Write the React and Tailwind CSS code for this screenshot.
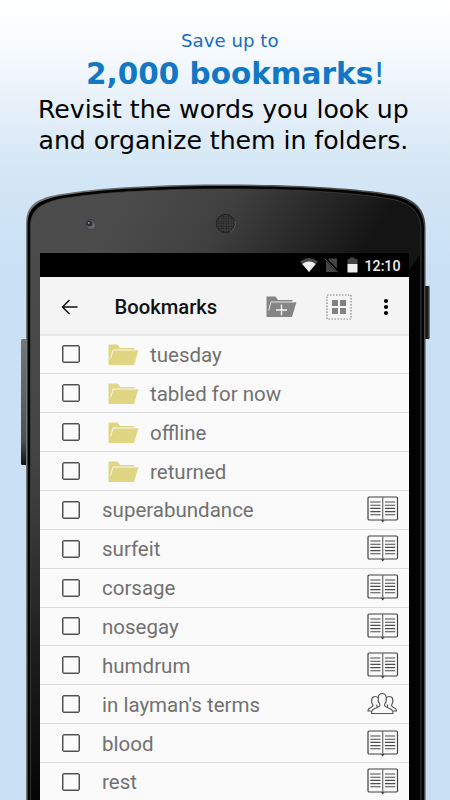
import React from "react";

const folders = ["tuesday", "tabled for now", "offline", "returned"];
const words = [
  ["superabundance", "book"],
  ["surfeit", "book"],
  ["corsage", "book"],
  ["nosegay", "book"],
  ["humdrum", "book"],
  ["in layman's terms", "people"],
  ["blood", "book"],
  ["rest", "book"],
];

function PhoneBody() {
  return (
    <svg className="absolute inset-0" width="450" height="800" viewBox="0 0 450 800">
      <defs>
        <linearGradient id="face" gradientUnits="userSpaceOnUse" x1="130" y1="190" x2="330" y2="310">
          <stop offset="0" stopColor="#4c4c4c" />
          <stop offset="0.4" stopColor="#404040" />
          <stop offset="1" stopColor="#141414" />
        </linearGradient>
        <linearGradient id="side" gradientUnits="userSpaceOnUse" x1="0" y1="253" x2="0" y2="800">
          <stop offset="0" stopColor="#4b4b4b" />
          <stop offset="0.35" stopColor="#454545" />
          <stop offset="0.5" stopColor="#383838" />
          <stop offset="0.72" stopColor="#1e1e1e" />
          <stop offset="1" stopColor="#050505" />
        </linearGradient>
        <linearGradient id="rim" x1="0" y1="0" x2="1" y2="0">
          <stop offset="0" stopColor="#77777a" />
          <stop offset="0.5" stopColor="#5c5c5c" />
          <stop offset="1" stopColor="#484848" />
        </linearGradient>
        <linearGradient id="keyL" x1="0" y1="0" x2="0" y2="1">
          <stop offset="0" stopColor="#777" />
          <stop offset="0.8" stopColor="#505050" />
          <stop offset="1" stopColor="#111" />
        </linearGradient>
        <linearGradient id="lens" x1="0" y1="0" x2="1" y2="1">
          <stop offset="0" stopColor="#343438" />
          <stop offset="1" stopColor="#807c80" />
        </linearGradient>
        <pattern id="mesh" width="2.5" height="2.5" patternUnits="userSpaceOnUse">
          <rect width="2.5" height="2.5" fill="#3a3a3a" />
          <circle cx="1.25" cy="1.25" r="0.7" fill="#1c1c1c" />
        </pattern>
      </defs>
      <rect x="21" y="339" width="7" height="126" rx="1.5" fill="url(#keyL)" />
      <rect x="424" y="286" width="5.5" height="53" rx="1" fill="#141414" />
      <path d="M428.3 287V338" stroke="#454545" />
      <path d="M26 810V224C26 206 35 199 58 194.500C102 187 166 184.500 226 184.500C286 184.500 350 187 394 194.500C417 199 425.500 211 425.500 228V810Z" fill="url(#rim)" />
      <path d="M27.500 810V224C27.500 208 37 200.500 59 196C103 188.500 167 186 226 186C285 186 349 188.500 393 196C415 200 424 212 424 229V810Z" fill="#030303" />
      <path d="M30.500 810V226C30.500 211 40 203.500 60 199C104 191.500 168 189 226 189C284 189 348 191.500 391 199C412 203 421 214 421 230V810Z" fill="url(#face)" stroke="#454545" strokeWidth="0.7" />
      <rect x="31" y="253" width="9" height="550" fill="url(#side)" />
      <path d="M409 270L420.500 254V800H409Z" fill="#020202" />
      <path d="M420.700 254V800" stroke="#303030" strokeWidth="0.8" />
      <circle cx="90.500" cy="224.500" r="5" fill="url(#lens)" stroke="#343434" strokeWidth="0.6" />
      <circle cx="89.500" cy="223.500" r="2.600" fill="#292936" />
      <circle cx="88.800" cy="223" r="1" fill="#8c8ca8" />
      <circle cx="225.500" cy="223.500" r="9.200" fill="url(#mesh)" stroke="#191919" strokeWidth="0.8" />
      <path d="M230 232A9.500 9.500 0 0 0 235 221" fill="none" stroke="#6a6a6a" strokeWidth="0.7" />
    </svg>
  );
}

function Folder({ plus }) {
  return (
    <svg width="31" height="22" viewBox="0 0 31 22" className="shrink-0">
      <path d="M0.500 21V0.500H9.500L12 4H26.500V6H30.500L26 21Z" fill={plus ? "#858585" : "#e0d582"} />
      <path d="M26.500 5.200H31V6.300H26.500Z" fill={plus ? "#f4f4f4" : "#fafafa"} />
      <path d="M2.700 14.500L5 6H27" fill="none" stroke={plus ? "#f4f4f4" : "#fafafa"} strokeWidth="0.900" />
      {plus && <path d="M15.500 8.500V19.500M10 14H21" stroke="#f4f4f4" strokeWidth="1.300" />}
    </svg>
  );
}

function Book() {
  return (
    <svg width="32" height="27" viewBox="0 0 32 27" fill="none" className="shrink-0">
      <rect x="1" y="1" width="29.500" height="23" rx="1.200" stroke="#404040" strokeWidth="1.200" />
      <path d="M15.700 1V25" stroke="#757575" strokeWidth="1.300" />
      <path d="M14 24.300H17.500L15.700 26.500Z" fill="#333" />
      <path d="M3.300 6H13.500M3.300 9.200H13.500M3.300 12.400H13.500M3.300 15.600H13.500M3.300 18.800H13.500M18 6H28.200M18 9.200H28.200M18 12.400H28.200M18 15.600H28.200M18 18.800H28.200" stroke="#4b4b4b" strokeWidth="1.100" />
    </svg>
  );
}

function People() {
  return (
    <svg width="32" height="24" viewBox="0 0 32 24" fill="none" stroke="#555" strokeWidth="1.150" strokeLinejoin="round" className="shrink-0">
      <path d="M4.500 21.500C4 18 6 17 9 16C13 14.500 13.500 13.500 12.500 11.500C11 10 11 8 11.300 5.500C11.500 2.500 13 1.500 15.300 1.500C17.700 1.500 19 2.500 19.200 5.500C19.500 8 19.500 10 18 11.500C17 13.500 17.500 14.500 21.500 16C24.500 17 26.500 18 26 21.500Z" />
      <path d="M11 6C10.300 4.700 8.500 4.300 7 4.800C5 5.300 4.500 7 4.700 9C4.500 10.500 4.800 11.500 5.800 12.500C6.300 14.500 5.500 15 3.500 15.800C1.500 16.500 1 17.500 1 19H4.500" />
      <path d="M19.500 6C20.200 4.700 22 4.300 23.500 4.800C25.500 5.300 26 7 25.800 9C26 10.500 25.700 11.500 24.700 12.500C24.200 14.500 25 15 27 15.800C29 16.500 29.500 17.500 29.500 19H26" />
      <path d="M10.200 12.500C9.500 13.500 9.500 14.300 10.500 15.300M20.300 12.500C21 13.500 21 14.300 20 15.300" />
    </svg>
  );
}

function Checkbox() {
  return <span className="h-[18px] w-[18px] shrink-0 rounded-[2px] border-[1.5px] border-[#505050] shadow-[inset_0_0_0_0.5px_#555]" />;
}

function StatusBar() {
  return (
    <div className="flex h-[24px] items-center justify-end bg-black pr-[8.500px] text-[#eeeeee]">
      <svg width="58" height="16" viewBox="0 0 58 16" className="mr-[7px]">
        <path d="M0 4.500Q9 -2.500 18 4.500L9 15Z" fill="#484848" />
        <path d="M2.200 7Q9 2.200 15.800 7L9 15Z" fill="#eee" />
        <path d="M29 1.500H37V15H26V4.500Z" fill="#444" />
        <path d="M25.500 1.500L38.500 15" stroke="#000" strokeWidth="2.600" />
        <path d="M25 2L38 15.500" stroke="#666" strokeWidth="0.900" />
        <path d="M50 0.500H54.500V2H57.500V7.500H47.500V2H50Z" fill="#444" />
        <path d="M47.500 7H57.500V15.500H47.500Z" fill="#eee" />
      </svg>
      <span className="mt-px font-['Roboto'] text-[14.2px] leading-[16px] font-medium">12:10</span>
    </div>
  );
}

function Toolbar() {
  return (
    <div className="flex h-[59px] items-center border-b-2 border-[#e7e7e7] bg-[#f4f4f4] pt-[2px] pr-[20px] pl-[21px]">
      <svg width="17" height="16" viewBox="0 0 17 16" fill="none" stroke="#111" strokeWidth="1.500">
        <path d="M16.500 8H1.500M8.500 1L1.500 8L8.500 15" />
      </svg>
      <h1 className="ml-[36.500px] font-['Roboto'] text-[20.200px] leading-6 font-medium text-[#111]">Bookmarks</h1>
      <div className="ml-auto flex items-center">
        <Folder plus />
        <svg width="26" height="26" viewBox="0 0 26 26" className="ml-[29px]">
          <rect x="1" y="1" width="24" height="24" fill="none" stroke="#808080" strokeWidth="1.200" strokeDasharray="1.500 1.500" />
          <path d="M6 6h6v6H6ZM14 6h6v6h-6ZM6 14h6v6H6ZM14 14h6v6h-6Z" fill="#818181" />
        </svg>
        <svg width="6" height="18" viewBox="0 0 6 18" className="ml-[31px]">
          <circle cx="3" cy="3" r="2.100" />
          <circle cx="3" cy="9" r="2.100" />
          <circle cx="3" cy="15" r="2.100" />
        </svg>
      </div>
    </div>
  );
}

const rowClass =
  "flex h-[38.87px] items-center border-b border-[#dcdcdc] pl-[22px] pr-[10px] font-['Roboto'] text-[20.5px] leading-6 text-[#717171]";

export default function App() {
  return (
    <main className="relative h-[800px] w-[450px] overflow-hidden bg-[linear-gradient(to_bottom,#ffffff_0,#f8fbfe_45px,#e8f1fa_100px,#d4e7f5_168px,#cae1f5_265px,#cae1f5_800px)]">
      <PhoneBody />
      <div className="relative flex h-full flex-col">
        <header className="flex h-[253px] shrink-0 flex-col pt-[30px] font-['DejaVu_Sans'] whitespace-nowrap">
          <p className="ml-[181px] text-[18.200px] leading-[22px] text-[#176cc0]">Save up to</p>
          <p className="ml-[86px] h-[42px] text-[29.500px] leading-[44px] text-[#1278c5]">
            <b>2,000 bookmarks</b>!
          </p>
          <p className="ml-[38px] h-[31px] text-[25.200px] leading-[31px] text-black">Revisit the words you look up</p>
          <p className="ml-[38.500px] h-[31px] text-[25.200px] leading-[31px] tracking-[-0.040px] text-black">and organize them in folders.</p>
        </header>
        <section className="ml-[40px] w-[369px] bg-[#fafafa]">
          <StatusBar />
          <Toolbar />
          <ul className="-mt-[0.500px]">
            {folders.map((name) => (
              <li key={name} className={rowClass}>
                <Checkbox />
                <span className="ml-[27.500px] flex pt-px"><Folder /></span>
                <span className="ml-[11.500px] pt-[2px]">{name}</span>
              </li>
            ))}
            {words.map(([name, kind]) => (
              <li key={name} className={rowClass}>
                <Checkbox />
                <span className="ml-[22px] pt-px">{name}</span>
                <span className="ml-auto flex">{kind === "book" ? <Book /> : <People />}</span>
              </li>
            ))}
          </ul>
        </section>
      </div>
    </main>
  );
}
